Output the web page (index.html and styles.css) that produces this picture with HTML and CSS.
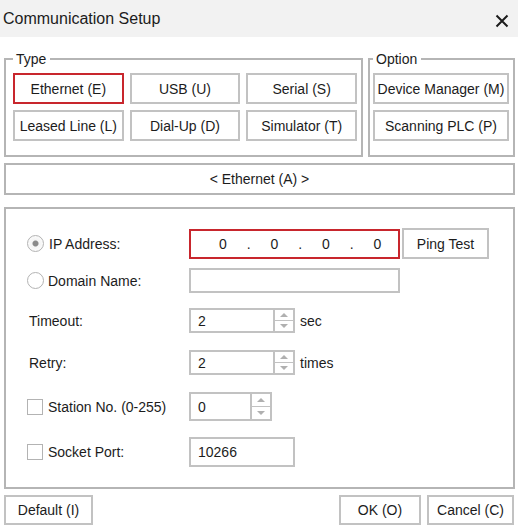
FILE: index.html
```html
<!DOCTYPE html>
<html lang="en">
<head>
  <meta charset="UTF-8" />
  <meta name="viewport" content="width=device-width, initial-scale=1.0"/>
  <title>Communication Setup</title>
  <link rel="stylesheet" href="styles.css">
</head>
<body>
  <div class="dialog">
    <header class="titlebar">
      <span class="title">Communication Setup</span>
      <button class="close" aria-label="Close">
        <svg width="14" height="14" viewBox="0 0 14 14">
          <path d="M1.5 1.5 L12.5 12.5 M12.5 1.5 L1.5 12.5" stroke="#1c1c1c" stroke-width="2" fill="none"/>
        </svg>
      </button>
    </header>

    <div class="dialog-body">
      <div class="groups">
        <fieldset class="group group-type">
          <legend>Type</legend>
          <div class="btn-grid">
            <button class="btn btn-active">Ethernet (E)</button>
            <button class="btn">USB (U)</button>
            <button class="btn">Serial (S)</button>
            <button class="btn">Leased Line (L)</button>
            <button class="btn">Dial-Up (D)</button>
            <button class="btn">Simulator (T)</button>
          </div>
        </fieldset>
        <fieldset class="group group-option">
          <legend>Option</legend>
          <div class="btn-stack">
            <button class="btn">Device Manager (M)</button>
            <button class="btn">Scanning PLC (P)</button>
          </div>
        </fieldset>
      </div>

      <div class="mode-bar">&lt; Ethernet (A) &gt;</div>

      <div class="settings">
        <div class="row row-ip">
          <label class="row-label"><span class="radio checked"></span>IP Address:</label>
          <div class="ip-box">
            <span class="octet">0</span><span class="dot">.</span>
            <span class="octet">0</span><span class="dot">.</span>
            <span class="octet">0</span><span class="dot">.</span>
            <span class="octet">0</span>
          </div>
          <button class="btn btn-ping">Ping Test</button>
        </div>

        <div class="row row-domain">
          <label class="row-label"><span class="radio"></span>Domain Name:</label>
          <div class="field field-domain"></div>
        </div>

        <div class="row row-timeout">
          <label class="row-label plain">Timeout:</label>
          <div class="field field-num">2</div>
          <div class="spin"><span class="up"></span><span class="down"></span></div>
          <span class="unit">sec</span>
        </div>

        <div class="row row-retry">
          <label class="row-label plain">Retry:</label>
          <div class="field field-num">2</div>
          <div class="spin"><span class="up"></span><span class="down"></span></div>
          <span class="unit">times</span>
        </div>

        <div class="row row-station">
          <label class="row-label"><span class="check"></span>Station No. (0-255)</label>
          <div class="field field-small">0</div>
          <div class="spin"><span class="up"></span><span class="down"></span></div>
        </div>

        <div class="row row-socket">
          <label class="row-label"><span class="check"></span>Socket Port:</label>
          <div class="field field-port">10266</div>
        </div>
      </div>

      <div class="footer">
        <button class="btn btn-default">Default (I)</button>
        <div class="footer-right">
          <button class="btn btn-ok">OK (O)</button>
          <button class="btn btn-cancel">Cancel (C)</button>
        </div>
      </div>
    </div>
  </div>
</body>
</html>
```

FILE: styles.css
```css
* {
  box-sizing: border-box;
  margin: 0;
  padding: 0;
  font-family: 'Liberation Sans', Arial, sans-serif;
}

body {
  background: #ffffff;
  color: #1c1c1c;
  font-size: 14px;
  width: 518px;
}

.titlebar {
  height: 37px;
  background: #f2f2f2;
  display: flex;
  align-items: center;
  justify-content: space-between;
  padding: 0 9px 0 3px;
}

.title {
  font-size: 16px;
  color: #1c1c1c;
}

.close {
  background: none;
  border: none;
  display: flex;
  margin-top: 5px;
}

.dialog-body {
  padding: 14px 3px 0 4px;
}

.groups {
  display: flex;
  gap: 5px;
}

.group {
  border: 2px solid #b5b5b5;
  min-width: 0;
}

.group legend {
  font-size: 14px;
  line-height: 16px;
  padding: 0 4px 0 3px;
  color: #1c1c1c;
}

.group-type {
  width: 359px;
  padding: 6px 4px 14px 7px;
}

.group-option {
  width: 147px;
  padding: 6px 4px 14px 3px;
}

.btn-grid {
  display: grid;
  grid-template-columns: repeat(3, 1fr);
  gap: 6px;
}

.btn-stack {
  display: grid;
  gap: 6px;
}

.btn {
  height: 31px;
  background: #ffffff;
  border: 2px solid #c2c2c2;
  font-size: 14px;
  color: #1c1c1c;
  white-space: nowrap;
}

.btn-active {
  border-color: #c8262d;
}

.mode-bar {
  margin-top: 6px;
  height: 32px;
  border: 2px solid #b5b5b5;
  display: flex;
  align-items: center;
  justify-content: center;
  font-size: 14px;
}

.settings {
  margin-top: 12px;
  height: 282px;
  border: 2px solid #b5b5b5;
  padding: 19px 0 0 21px;
}

.row {
  display: flex;
  align-items: center;
}

.row-ip { height: 31px; }
.row-domain { height: 25px; margin-top: 9px; }
.row-timeout { height: 25px; margin-top: 15px; }
.row-retry { height: 25px; margin-top: 17px; }
.row-station { height: 29px; margin-top: 17px; }
.row-socket { height: 30px; margin-top: 16px; }

.row-label {
  width: 162px;
  display: flex;
  align-items: center;
  flex-shrink: 0;
}

.row-label.plain {
  padding-left: 2px;
}

.radio {
  width: 17px;
  height: 17px;
  border-radius: 50%;
  border: 1.5px solid #b3b3b3;
  background: #ffffff;
  margin-right: 4px;
}

.radio.checked {
  background: radial-gradient(circle, #8a8a8a 0, #8a8a8a 2.5px, #f4f4f4 3.5px, #ffffff 100%);
  margin-right: 5px;
}

.check {
  width: 16px;
  height: 16px;
  border: 1.5px solid #b3b3b3;
  background: #ffffff;
  margin-right: 5px;
}

.ip-box {
  width: 211px;
  height: 30px;
  border: 2px solid #c8262d;
  display: flex;
  align-items: center;
  padding-left: 19px;
}

.octet {
  width: 26px;
  text-align: center;
}

.dot {
  width: 25.5px;
  text-align: center;
}

.btn-ping {
  margin-left: 2px;
  width: 87px;
}

.field {
  border: 2px solid #c2c2c2;
  height: 100%;
  display: flex;
  align-items: center;
  padding-left: 7px;
}

.field-domain {
  width: 211px;
}

.field-num {
  width: 86px;
}

.field-small {
  width: 63px;
}

.field-port {
  width: 106px;
}

.spin {
  width: 20px;
  height: 100%;
  border: 2px solid #c2c2c2;
  border-left: none;
  display: flex;
  flex-direction: column;
}

.spin span {
  flex: 1;
  display: flex;
  align-items: center;
  justify-content: center;
}

.spin .up {
  border-bottom: 1.5px solid #c2c2c2;
}

.spin .up::after {
  content: '';
  border-left: 4px solid transparent;
  border-right: 4px solid transparent;
  border-bottom: 4px solid #b0b0b0;
}

.spin .down::after {
  content: '';
  border-left: 4px solid transparent;
  border-right: 4px solid transparent;
  border-top: 4px solid #b0b0b0;
}

.unit {
  margin-left: 5px;
}

.footer {
  margin-top: 6px;
  display: flex;
  justify-content: space-between;
  padding-right: 1px;
}

.footer .btn {
  height: 30px;
}

.footer-right {
  display: flex;
  gap: 6px;
}

.btn-default { width: 89px; }
.btn-ok { width: 82px; }
.btn-cancel { width: 87px; }
```
